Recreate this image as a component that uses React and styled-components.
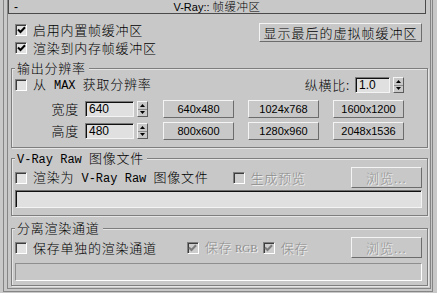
import styled, { createGlobalStyle } from 'styled-components'

const GlobalStyle = createGlobalStyle`
  html, body {
    margin: 0;
    padding: 0;
    background: #c8c8c8;
  }
  body {
    font-family: "Noto Sans CJK SC", "Liberation Sans", sans-serif;
    font-weight: 300;
    color: #000;
  }
  * {
    box-sizing: border-box;
  }
`

const Screen = styled.div`
  width: 437px;
  height: 293px;
  overflow: hidden;
  background: #c8c8c8;
  padding-left: 3px;
`

const OuterFrame = styled.div`
  width: 430px;
  height: 292px;
  border: 1px solid #858585;
  border-top: none;
  padding: 0 1px 0 3px;
`

const InnerFrame = styled.div`
  width: 424px;
  height: 289px;
  border: 1px solid #858585;
  border-top: none;
`

const TitleBar = styled.div`
  width: 418px;
  height: 14px;
  border: 1px solid #4a4a4a;
  border-top: none;
  display: grid;
  grid-template-columns: minmax(0, 1fr) auto minmax(0, 1fr);
  align-items: center;
  padding: 0 5px;
  font-family: "Liberation Sans", "Noto Sans CJK SC", sans-serif;
  font-weight: 400;
  font-size: 11px;
  line-height: 13px;
`

const Minus = styled.span`
  font-size: 12px;
`

const TitleText = styled.span`
  white-space: nowrap;
  & b {
    font-weight: 300;
    font-family: "Noto Sans CJK SC", sans-serif;
    font-size: 11.5px;
    letter-spacing: 0.5px;
  }
`

const TopArea = styled.div`
  display: flex;
  justify-content: space-between;
  align-items: flex-start;
  padding: 7px 8px 0 7px;
`

const CheckList = styled.div`
  display: flex;
  flex-direction: column;
`

const Row = styled.div`
  display: flex;
  align-items: center;
  height: ${p => p.$h}px;
  margin-top: ${p => p.$mt || 0}px;
  white-space: nowrap;
`

const Label = styled.span`
  font-size: 13px;
  letter-spacing: 0.75px;
  line-height: 16px;
  margin-left: ${p => p.$ml || 0}px;
  color: ${p => (p.$disabled ? '#8c8c8c' : '#000')};
  text-shadow: ${p => (p.$disabled ? '1px 1px 0 #f2f2f2' : 'none')};
`

const Mono = styled.span`
  font-family: "Liberation Mono", monospace;
  font-weight: 400;
  font-size: 12px;
  letter-spacing: 0;
  white-space: pre;
`

const Small = styled.span`
  font-family: "Liberation Serif", serif;
  font-weight: 400;
  font-size: 11px;
  letter-spacing: 0;
  white-space: pre;
`

const Box = styled.span`
  width: 12px;
  height: 12px;
  flex: none;
  display: flex;
  align-items: center;
  justify-content: center;
  background: ${p => (p.$disabled ? '#cdcdcd' : '#e2e2e2')};
  border: 1px solid;
  border-color: #808080 #ffffff #ffffff #808080;
  box-shadow: inset 1px 1px 0 #3c3c3c;
  margin-left: ${p => p.$ml || 0}px;
  margin-right: 6px;
`

function Check({ checked, disabled, ml }) {
  return (
    <Box $disabled={disabled} $ml={ml}>
      {checked && (
        <svg width="9" height="8" viewBox="0 0 9 8">
          <path
            d="M1 3.5 L3.5 6 L8 1.2"
            fill="none"
            stroke={disabled ? '#7c7c7c' : '#000'}
            strokeWidth="2"
          />
        </svg>
      )}
    </Box>
  )
}

const Button = styled.button`
  width: ${p => p.$w}px;
  height: ${p => p.$h}px;
  flex: none;
  padding: 0;
  margin: ${p => p.$m || 0};
  background: #c8c8c8;
  border: 1px solid;
  border-color: #f4f4f4 #6c6c6c #6c6c6c #f4f4f4;
  font-family: ${p => (p.$cjk ? '"Noto Sans CJK SC", sans-serif' : '"Liberation Sans", sans-serif')};
  font-weight: ${p => (p.$cjk ? 300 : 400)};
  font-size: ${p => (p.$cjk ? 13 : 11)}px;
  letter-spacing: ${p => (p.$cjk ? 1 : 0)}px;
  line-height: 14px;
  color: ${p => (p.disabled ? '#939393' : '#000')};
  text-shadow: ${p => (p.disabled ? '1px 1px 0 #f2f2f2' : 'none')};
  white-space: nowrap;
`

const Group = styled.section`
  margin: ${p => p.$mt}px 2px 0 3px;
  border: 1px solid #7e7e7e;
  box-shadow: inset 1px 1px 0 #e6e6e6, 1px 1px 0 #e6e6e6;
  padding: 0 5px ${p => p.$pb}px 3px;
`

const GroupTitle = styled.div`
  width: fit-content;
  height: 14px;
  margin-top: -8px;
  padding: 0 3px 0 2px;
  background: #c8c8c8;
  font-size: 13px;
  letter-spacing: 0.75px;
  line-height: 14px;
  white-space: nowrap;
`

const SizeLabel = styled.span`
  width: 64px;
  margin-right: 6px;
  text-align: right;
  font-size: 13px;
  letter-spacing: 0.75px;
  line-height: 16px;
`

const Edit = styled.div`
  width: ${p => p.$w}px;
  height: 16px;
  flex: none;
  margin-left: ${p => p.$ml || 0}px;
  background: #e0e0e0;
  border: 1px solid;
  border-color: #7a7a7a #f4f4f4 #f4f4f4 #7a7a7a;
  box-shadow: inset 1px 1px 0 #101010;
  padding-left: 3px;
  font-family: "Liberation Sans", sans-serif;
  font-weight: 400;
  font-size: 12px;
  line-height: 14px;
`

const Spinner = styled.div`
  width: 11px;
  height: 16px;
  flex: none;
  margin-left: 3px;
  display: flex;
  flex-direction: column;
  border: 1px solid;
  border-color: #f4f4f4 #5c5c5c #5c5c5c #f4f4f4;
`

const SpinHalf = styled.span`
  flex: 1;
  display: flex;
  align-items: center;
  justify-content: center;
  border-top: ${p => (p.$down ? '1px solid #8a8a8a' : 'none')};
`

function Spin() {
  return (
    <Spinner>
      <SpinHalf>
        <svg width="5" height="3" viewBox="0 0 5 3"><path d="M2.5 0 L5 3 L0 3 Z" fill="#000" /></svg>
      </SpinHalf>
      <SpinHalf $down>
        <svg width="5" height="3" viewBox="0 0 5 3"><path d="M0 0 L5 0 L2.5 3 Z" fill="#000" /></svg>
      </SpinHalf>
    </Spinner>
  )
}

const RightCluster = styled.div`
  display: flex;
  align-items: center;
  margin-left: auto;
  margin-right: 18px;
`

const Presets = styled.div`
  display: flex;
  gap: 14px;
  margin-left: 15px;
`

const PathField = styled.div`
  height: 18px;
  margin-top: ${p => p.$mt}px;
  background: ${p => (p.$disabled ? '#c8c8c8' : '#e0e0e0')};
  border: 1px solid;
  border-color: ${p => (p.$disabled ? '#8e8e8e #ffffff #ffffff #8e8e8e' : '#6e6e6e #f4f4f4 #f4f4f4 #6e6e6e')};
  box-shadow: ${p => (p.$disabled ? 'none' : 'inset 1px 1px 0 #101010')};
`

const Gap = styled.span`
  flex: 1;
`

export default function App() {
  return (
    <>
      <GlobalStyle />
      <Screen>
        <OuterFrame>
          <InnerFrame>
            <TitleBar>
              <Minus>-</Minus>
              <TitleText>V-Ray:: <b>帧缓冲区</b></TitleText>
              <span />
            </TitleBar>

            <TopArea>
              <CheckList>
                <Row $h={18}>
                  <Check checked />
                  <Label>启用内置帧缓冲区</Label>
                </Row>
                <Row $h={18}>
                  <Check checked />
                  <Label>渲染到内存帧缓冲区</Label>
                </Row>
              </CheckList>
              <Button $w={163} $h={19} $cjk $m="2px 0 0 0">显示最后的虚拟帧缓冲区</Button>
            </TopArea>

            <Group $mt={11} $pb={7}>
              <GroupTitle>输出分辨率</GroupTitle>
              <Row $h={16} $mt={2}>
                <Check />
                <Label>从<Mono> MAX </Mono>获取分辨率</Label>
                <RightCluster>
                  <Label>纵横比:</Label>
                  <Edit $w={35} $ml={5}>1.0</Edit>
                  <Spin />
                </RightCluster>
              </Row>
              <Row $h={18} $mt={7}>
                <SizeLabel>宽度</SizeLabel>
                <Edit $w={49}>640</Edit>
                <Spin />
                <Presets>
                  <Button $w={71} $h={18}>640x480</Button>
                  <Button $w={71} $h={18}>1024x768</Button>
                  <Button $w={71} $h={18}>1600x1200</Button>
                </Presets>
              </Row>
              <Row $h={18} $mt={4}>
                <SizeLabel>高度</SizeLabel>
                <Edit $w={49}>480</Edit>
                <Spin />
                <Presets>
                  <Button $w={71} $h={18}>800x600</Button>
                  <Button $w={71} $h={18}>1280x960</Button>
                  <Button $w={71} $h={18}>2048x1536</Button>
                </Presets>
              </Row>
            </Group>

            <Group $mt={10} $pb={7}>
              <GroupTitle><Mono>V-Ray Raw </Mono>图像文件</GroupTitle>
              <Row $h={21} $mt={2}>
                <Check />
                <Label>渲染为<Mono> V-Ray Raw </Mono>图像文件</Label>
                <Check disabled ml={24} />
                <Label $disabled>生成预览</Label>
                <Gap />
                <Button $w={71} $h={21} $cjk disabled>浏览...</Button>
              </Row>
              <PathField $mt={2} />
            </Group>

            <Group $mt={12} $pb={4}>
              <GroupTitle>分离渲染通道</GroupTitle>
              <Row $h={21} $mt={2}>
                <Check />
                <Label>保存单独的渲染通道</Label>
                <Check checked disabled ml={30} />
                <Label $disabled>保存<Small> RGB</Small></Label>
                <Check checked disabled ml={5} />
                <Label $disabled>保存</Label>
                <Gap />
                <Button $w={71} $h={21} $cjk disabled>浏览...</Button>
              </Row>
              <PathField $mt={5} $disabled />
            </Group>
          </InnerFrame>
        </OuterFrame>
      </Screen>
    </>
  )
}
